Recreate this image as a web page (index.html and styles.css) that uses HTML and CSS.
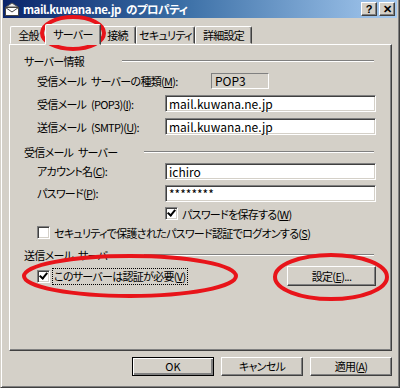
FILE: index.html
```html
<!DOCTYPE html>
<html lang="ja">
<head>
  <meta charset="UTF-8" />
  <title>mail.kuwana.ne.jp のプロパティ</title>
  <link rel="stylesheet" href="styles.css">
</head>
<body>

<div class="window">
  <div class="titlebar">
    <svg class="app-icon" width="16" height="16" viewBox="0 0 16 16">
      <path d="M2 6 L8 2 L14 6 Z" fill="#e8e8e8" stroke="#555" stroke-width="1"/>
      <rect x="1.5" y="6.5" width="13" height="8" fill="#fff" stroke="#444"/>
      <path d="M1.5 6.5 L8 11 L14.5 6.5" fill="none" stroke="#444"/>
    </svg>
    <span class="title">mail.kuwana.ne.jp のプロパティ</span>
    <div class="caption-btns">
      <span class="cap">?</span>
      <span class="cap">✕</span>
    </div>
  </div>

  <div class="tabs">
    <div class="tab t1">全般</div>
    <div class="tab t2 active">サーバー</div>
    <div class="tab t3">接続</div>
    <div class="tab t4">セキュリティ</div>
    <div class="tab t5">詳細設定</div>
  </div>

  <div class="panel">
    <div class="group-title g1"><span>サーバー情報</span><i></i></div>
    <div class="row tall">
      <label class="lbl wide">受信メール サーバーの種類(<u>M</u>):</label>
      <div class="static">POP3</div>
    </div>
    <div class="row tall">
      <label class="lbl">受信メール (POP3)(<u>I</u>):</label>
      <div class="input">mail.kuwana.ne.jp</div>
    </div>
    <div class="row tall">
      <label class="lbl">送信メール (SMTP)(<u>U</u>):</label>
      <div class="input">mail.kuwana.ne.jp</div>
    </div>

    <div class="group-title g2"><span>受信メール サーバー</span><i></i></div>
    <div class="row">
      <label class="lbl">アカウント名(<u>C</u>):</label>
      <div class="input">ichiro</div>
    </div>
    <div class="row">
      <label class="lbl">パスワード(<u>P</u>):</label>
      <div class="input">********</div>
    </div>
    <div class="chk-row indent">
      <span class="chk checked"></span>
      <span>パスワードを保存する(<u>W</u>)</span>
    </div>
    <div class="chk-row">
      <span class="chk"></span>
      <span>セキュリティで保護されたパスワード認証でログオンする(<u>S</u>)</span>
    </div>

    <div class="group-title g3"><span>送信メール サーバー</span><i></i></div>
    <div class="row send">
      <div class="chk-inline">
        <span class="chk checked"></span>
        <span class="focus">このサーバーは認証が必要(<u>V</u>)</span>
      </div>
      <div class="btn setting">設定(<u>E</u>)...</div>
    </div>
  </div>

  <div class="footer">
    <div class="btn default">OK</div>
    <div class="btn">キャンセル</div>
    <div class="btn">適用(<u>A</u>)</div>
  </div>

  <svg class="marks" width="400" height="388" viewBox="0 0 400 388">
    <ellipse cx="72" cy="33" rx="31" ry="16" fill="none" stroke="#e8141a" stroke-width="4"/>
    <ellipse cx="129" cy="276" rx="106" ry="20" fill="none" stroke="#e8141a" stroke-width="4"/>
    <ellipse cx="330" cy="277" rx="56" ry="22" fill="none" stroke="#e8141a" stroke-width="4"/>
  </svg>
</div>

</body>
</html>
```

FILE: styles.css
```css
body {
  margin: 0;
  background: #d4d0c8;
  font-family: "Noto Sans CJK JP", sans-serif;
  font-feature-settings: "palt";
  font-size: 11px;
  letter-spacing: -0.7px;
  word-spacing: 3px;
  color: #000;
}
.window {
  position: relative;
  width: 400px;
  height: 388px;
  box-sizing: border-box;
  background: #d4d0c8;
  border-left: 1px solid #d4d0c8;
  border-right: 1px solid #404040;
  border-bottom: 1px solid #404040;
  box-shadow: inset 1px 0 #fff, inset -1px -1px #808080;
  padding: 0 2px 0 2px;
  overflow: hidden;
}
.titlebar {
  height: 18px;
  display: flex;
  align-items: center;
  background: linear-gradient(to right, #0a246a, #3a6ea5 45%, #a6caf0);
  color: #fff;
  padding: 0 2px 0 1px;
}
.app-icon {
  flex: none;
  margin-right: 3px;
}
.title {
  font-weight: bold;
  font-size: 11.5px;
  letter-spacing: -0.5px;
  white-space: nowrap;
}
.caption-btns {
  margin-left: auto;
  display: flex;
  gap: 2px;
}
.cap {
  width: 16px;
  height: 14px;
  box-sizing: border-box;
  background: #d4d0c8;
  border: 1px solid;
  border-color: #fff #404040 #404040 #fff;
  box-shadow: inset -1px -1px #808080;
  color: #000;
  font-family: "Liberation Sans", sans-serif;
  font-weight: bold;
  font-size: 11px;
  letter-spacing: 0;
  line-height: 12px;
  text-align: center;
}

.tabs {
  display: flex;
  height: 20px;
  margin: 6px 0 0 7px;
  align-items: flex-end;
}
.tab {
  height: 18px;
  box-sizing: border-box;
  border: 1px solid;
  border-color: #fff #404040 transparent #fff;
  box-shadow: inset -1px 0 #808080;
  border-radius: 2px 2px 0 0;
  text-align: center;
  line-height: 16px;
  white-space: nowrap;
}
.t1 { width: 37px; }
.t2 { width: 52px; }
.t3 { width: 37px; }
.t4 { width: 59px; }
.t5 { width: 57px; }
.tab.active {
  height: 21px;
  width: 56px;
  margin: 0 -2px -1px;
  position: relative;
  z-index: 1;
  background: #d4d0c8;
  line-height: 18px;
}

.panel {
  height: 307px;
  box-sizing: border-box;
  margin: 0 5px 0 6px;
  border: 1px solid;
  border-color: #fff #404040 #404040 #fff;
  box-shadow: inset -1px -1px #808080;
  padding: 8px 15px 0 14px;
}
.group-title {
  display: flex;
  align-items: center;
  height: 16px;
  margin-right: 2px;
  white-space: nowrap;
}
.group-title i {
  flex: 1;
  height: 0;
  margin-left: 26px;
  border-top: 1px solid #808080;
  border-bottom: 1px solid #fff;
}
.group-title.g1 i { margin-left: 38px; }
.group-title.g2 { margin-top: 6px; }
.group-title.g3 { margin-top: 5px; }

.row {
  display: flex;
  align-items: center;
  height: 22px;
  padding-left: 13px;
}
.row.tall { height: 23px; }
.lbl {
  width: 128px;
  flex: none;
  white-space: nowrap;
}
.lbl.wide { width: 174px; }
.static {
  width: 58px;
  height: 16px;
  box-sizing: border-box;
  border: 1px solid;
  border-color: #808080 #fff #fff #808080;
  padding-left: 3px;
  font-size: 12px;
  letter-spacing: 0;
  line-height: 14px;
}
.input {
  flex: 1;
  height: 17px;
  box-sizing: border-box;
  background: #fff;
  border: 1px solid;
  border-color: #808080 #fff #fff #808080;
  box-shadow: inset 1px 1px #404040, inset -1px -1px #d4d0c8;
  padding-left: 3px;
  font-size: 12px;
  letter-spacing: 0;
  line-height: 15px;
}

.chk-row {
  display: flex;
  align-items: center;
  gap: 4px;
  height: 19px;
  padding-left: 13px;
  white-space: nowrap;
}
.chk-row.indent { padding-left: 141px; }
.chk {
  flex: none;
  position: relative;
  width: 13px;
  height: 13px;
  box-sizing: border-box;
  background: #fff;
  border: 1px solid;
  border-color: #808080 #fff #fff #808080;
  box-shadow: inset 1px 1px #404040, inset -1px -1px #d4d0c8;
}
.chk.checked::after {
  content: "";
  position: absolute;
  left: 3px;
  top: 0px;
  width: 3px;
  height: 6px;
  border: solid #000;
  border-width: 0 2px 2px 0;
  transform: rotate(40deg);
}

.row.send {
  height: 26px;
  justify-content: space-between;
}
.chk-inline {
  display: flex;
  align-items: center;
  gap: 3px;
  white-space: nowrap;
}
.focus {
  outline: 1px dotted #000;
  padding: 0 1px;
  line-height: 15px;
}

.btn {
  width: 82px;
  height: 19px;
  box-sizing: border-box;
  border: 1px solid;
  border-color: #fff #404040 #404040 #fff;
  box-shadow: inset -1px -1px #808080;
  text-align: center;
  line-height: 17px;
  white-space: nowrap;
}
.btn.setting { width: 89px; height: 20px; line-height: 18px; }
.btn.default {
  border: 1px solid #000;
  box-shadow: inset 1px 1px #fff, inset -2px -2px #808080;
  letter-spacing: 0;
}

.footer {
  display: flex;
  justify-content: flex-end;
  gap: 7px;
  margin: 6px 5px 0 0;
}

.marks {
  position: absolute;
  left: 0;
  top: 0;
  pointer-events: none;
}
```
